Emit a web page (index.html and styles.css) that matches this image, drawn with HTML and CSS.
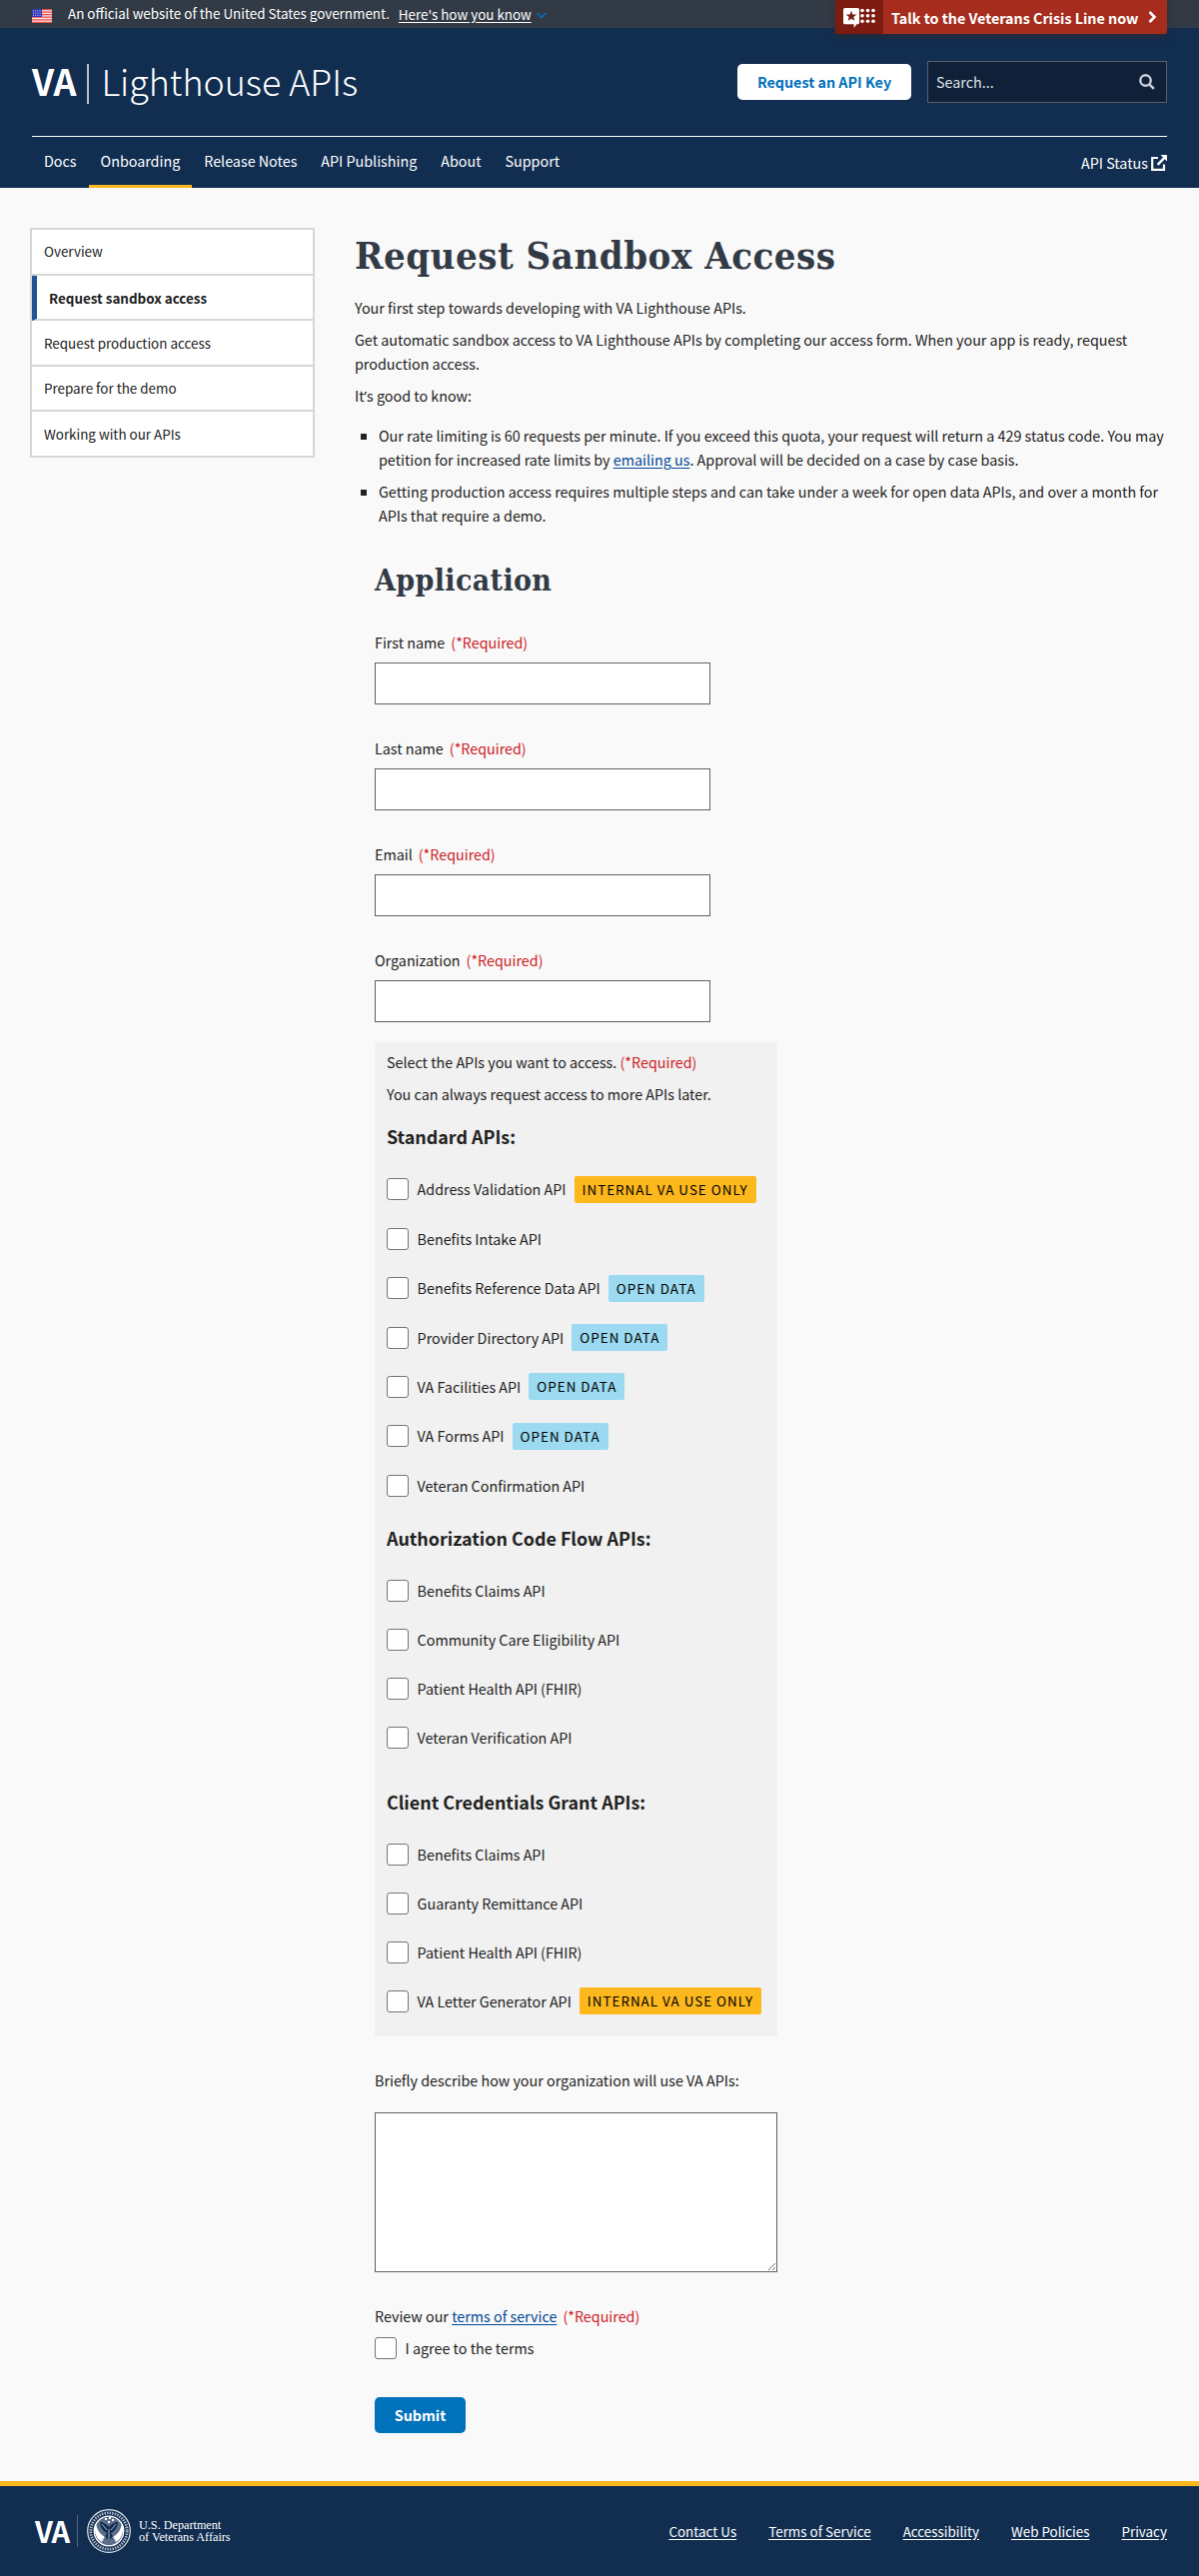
FILE: index.html
```html
<!DOCTYPE html>
<html lang="en">
<head>
<meta charset="utf-8">
<title>Request Sandbox Access | VA Lighthouse APIs</title>
<link rel="stylesheet" href="styles.css">
</head>
<body>
<div class="banner">
  <svg class="flag" width="20" height="14" viewBox="0 0 20 14"><path fill="#f8dcdc" d="M0 0h20v14H0z"/><path stroke="#e5524f" stroke-width="1.2" d="M0 .6h20M0 3.1h20M0 5.6h20M0 8.2h20M0 10.8h20M0 13.4h20"/><path fill="#2f38b5" d="M0 0h10v8H0z"/><path stroke="#c9ccf2" stroke-dasharray="1 1.2" d="M1 1.9h8M1 4.1h8M1 6.3h8"/></svg>
  <span class="banner-text">An official website of the United States government.</span>
  <a class="banner-link" href="#">Here's how you know</a>
  <svg class="banner-chevron" width="10" height="7" viewBox="0 0 10 7"><path d="M.8 1l4.2 4.4L9.200 1" fill="none" stroke="#0071bb" stroke-width="1.6"/></svg>
  <a class="crisis" href="#">
    <span class="crisis-icon"><svg width="33" height="20" viewBox="0 0 33 20"><path fill="#fff" d="M1.500 0h13A1.500 1.500 0 0 1 16 1.500v13.200a1.500 1.500 0 0 1-1.500 1.500H13.500L10.600 20v-3.800H1.500A1.500 1.500 0 0 1 0 14.700V1.500A1.500 1.500 0 0 1 1.500 0z"/><path fill="#7c1c10" d="M8 2.800l1.400 3.600 3.900.2-3 2.500 1 3.700L8 10.700l-3.300 2.100 1-3.700-3-2.500 3.900-.2z"/><g fill="#fff"><circle cx="19" cy="2.500" r="1.800"/><circle cx="24.500" cy="2.500" r="1.800"/><circle cx="30" cy="2.500" r="1.800"/><circle cx="19" cy="7.800" r="1.800"/><circle cx="24.500" cy="7.800" r="1.800"/><circle cx="30" cy="7.800" r="1.800"/><circle cx="19" cy="13.200" r="1.800"/><circle cx="24.500" cy="13.200" r="1.800"/><circle cx="30" cy="13.200" r="1.800"/></g></svg></span>
    <span class="crisis-text">Talk to the Veterans Crisis Line now</span>
    <svg width="9" height="12" viewBox="0 0 9 12"><path d="M1.500 1l5 5-5 5" fill="none" stroke="#fff" stroke-width="2.600"/></svg>
  </a>
</div>
<header class="header">
  <div class="brand-row">
    <a class="brand" href="#"><b>VA</b><i class="brand-rule"></i><span>Lighthouse APIs</span></a>
    <div class="tools">
      <a class="key-button" href="#">Request an API Key</a>
      <div class="search"><span>Search...</span><svg width="16" height="16" viewBox="0 0 16 16"><circle cx="6.500" cy="6.500" r="5.200" fill="none" stroke="#c9ced6" stroke-width="2.400"/><path d="M10.300 10.300l4.600 4.600" stroke="#c9ced6" stroke-width="2.600"/></svg></div>
    </div>
  </div>
  <nav class="nav">
    <a href="#">Docs</a><a class="on" href="#">Onboarding</a><a href="#">Release Notes</a><a href="#">API Publishing</a><a href="#">About</a><a href="#">Support</a>
    <span class="status">API Status<svg width="16" height="16" viewBox="0 0 16 16"><path d="M7 3H1.200v11.800H13V9.500" fill="none" stroke="#fff" stroke-width="2.200"/><path d="M9.500 0H16v6.500l-2.200-2.200-6.300 6.400-1.800-1.800L12 2.500z" fill="#fff"/></svg></span>
  </nav>
</header>
<div class="page">
  <aside class="side">
    <a href="#">Overview</a><a class="on" href="#">Request sandbox access</a><a href="#">Request production access</a><a href="#">Prepare for the demo</a><a href="#">Working with our APIs</a>
  </aside>
  <main class="main">
    <h1>Request Sandbox Access</h1>
    <p>Your first step towards developing with VA Lighthouse APIs.</p>
    <p>Get automatic sandbox access to VA Lighthouse APIs by completing our access form. When your app is ready, request production access.</p>
    <p>It<span class="quote">’</span>s good to know:</p>
    <ul class="notes">
      <li>Our rate limiting is 60 requests per minute. If you exceed this quota, your request will return a 429 status code. You may petition for increased rate limits by <a href="#">emailing us</a>. Approval will be decided on a case by case basis.</li>
      <li>Getting production access requires multiple steps and can take under a week for open data APIs, and over a month for APIs that require a demo.</li>
    </ul>
    <form class="form">
      <h2>Application</h2>
      <div class="field"><label for="first">First name<em>(*Required)</em></label><input id="first" type="text"></div>
      <div class="field"><label for="last">Last name<em>(*Required)</em></label><input id="last" type="text"></div>
      <div class="field"><label for="email">Email<em>(*Required)</em></label><input id="email" type="text"></div>
      <div class="field"><label for="org">Organization<em>(*Required)</em></label><input id="org" type="text"></div>
      <div class="apis">
        <p>Select the APIs you want to access. <em>(*Required)</em></p>
        <p>You can always request access to more APIs later.</p>
        <h3>Standard APIs:</h3>
        <div class="checks roomy">
          <label><input type="checkbox">Address Validation API<span class="tag internal">INTERNAL VA USE ONLY</span></label>
          <label><input type="checkbox">Benefits Intake API</label>
          <label><input type="checkbox">Benefits Reference Data API<span class="tag">OPEN DATA</span></label>
          <label><input type="checkbox">Provider Directory API<span class="tag">OPEN DATA</span></label>
          <label><input type="checkbox">VA Facilities API<span class="tag">OPEN DATA</span></label>
          <label><input type="checkbox">VA Forms API<span class="tag">OPEN DATA</span></label>
          <label><input type="checkbox">Veteran Confirmation API</label>
        </div>
        <h3 class="auth">Authorization Code Flow APIs:</h3>
        <div class="checks">
          <label><input type="checkbox">Benefits Claims API</label>
          <label><input type="checkbox">Community Care Eligibility API</label>
          <label><input type="checkbox">Patient Health API (FHIR)</label>
          <label><input type="checkbox">Veteran Verification API</label>
        </div>
        <h3 class="client">Client Credentials Grant APIs:</h3>
        <div class="checks">
          <label><input type="checkbox">Benefits Claims API</label>
          <label><input type="checkbox">Guaranty Remittance API</label>
          <label><input type="checkbox">Patient Health API (FHIR)</label>
          <label><input type="checkbox">VA Letter Generator API<span class="tag internal">INTERNAL VA USE ONLY</span></label>
        </div>
      </div>
      <label class="describe" for="describe">Briefly describe how your organization will use VA APIs:</label>
      <textarea id="describe"></textarea>
      <div class="review">Review our <a href="#">terms of service</a><em>(*Required)</em></div>
      <label class="agree"><input type="checkbox">I agree to the terms</label>
      <button class="submit" type="button">Submit</button>
    </form>
  </main>
</div>
<footer class="footer">
  <div class="logo">
    <b>VA</b><i class="logo-rule"></i>
    <svg width="44" height="44" viewBox="0 0 44 44"><circle cx="22" cy="22" r="21.300" fill="#112e51" stroke="#dfe4ea" stroke-width="1.200"/><circle cx="22" cy="22" r="18.200" fill="none" stroke="#aab5c4" stroke-width="2.800" stroke-dasharray="1.500 1.100"/><circle cx="22" cy="22" r="14.800" fill="#5d6f88" stroke="#fff" stroke-width="1.300"/><path fill="#fff" d="M9 14c1 7 4 11 9 14l-3 5C9 30 6 21 9 14zM35 14c-1 7-4 11-9 14l3 5c6-3 9-12 6-19zM18 9h2v2h-2zM22 8h2v2h-2zM25 10h2v2h-2zM21 12h2v2h-2z"/><path fill="#112e51" d="M22 18c-2-3-6-5-9-5 0 5 3 9 7 11l-4 7 4-2 2 4 2-4 4 2-4-7c4-2 7-6 7-11-3 0-7 2-9 5z"/><path d="M15 15l5 6M29 15l-5 6M22 20v12M19 28l-5 4M25 28l5 4" stroke="#cdd4de" stroke-width=".8"/></svg>
    <span class="logo-text"><span>U.S. Department</span><span>of Veterans Affairs</span></span>
  </div>
  <nav class="links"><a href="#">Contact Us</a><a href="#">Terms of Service</a><a href="#">Accessibility</a><a href="#">Web Policies</a><a href="#">Privacy</a></nav>
</footer>
</body>
</html>
```
FILE: styles.css
```css
* { box-sizing: border-box; }
body {
  margin: 0;
  background: #f9f9f9;
  color: #212121;
  font: 14.32px/24px "Noto Sans CJK SC", "Noto Sans", sans-serif;
}
a { color: #004795; text-decoration: underline; text-underline-offset: 2px; }
em { font-style: normal; color: #cd2026; }
input, textarea, button { font: inherit; margin: 0; }
.quote { font-family: "Open Sans", sans-serif; line-height: 1; }

.banner {
  display: flex;
  align-items: flex-start;
  height: 28px;
  padding: 0 32px;
  background: #323a45;
  color: #fff;
  font-size: 13.420px;
  line-height: 27px;
}
.flag { margin-top: 9px; }
.banner-text { margin-left: 16px; }
.banner-link { margin: 1px 0 0 9px; color: #fff; }
.banner-chevron { margin: 12px 0 0 5px; }
.crisis {
  display: flex;
  align-items: center;
  position: relative;
  width: 332px;
  height: 34px;
  margin-left: auto;
  background: #a62d1e;
  border-radius: 0 0 3px 0;
  box-shadow: 0 3px 6px rgba(50, 40, 40, .7);
  color: #fff;
  font-size: 14.320px;
  font-weight: 700;
  text-decoration: none;
}
.crisis-icon {
  display: flex;
  width: 48px;
  height: 34px;
  padding: 8px 0 0 8px;
  background: #7c1c10;
}
.crisis-text { margin: 0 10px 0 8px; white-space: nowrap; }

.header { height: 160px; padding: 0 32px; background: #112e51; }
.brand-row {
  display: flex;
  align-items: center;
  justify-content: space-between;
  height: 109px;
  border-bottom: 1px solid #fff;
}
.brand {
  display: flex;
  align-items: center;
  margin-top: -4px;
  color: #fff;
  font-size: 35.800px;
  line-height: 40px;
  text-decoration: none;
  white-space: nowrap;
}
.brand span { font-weight: 300; }
.brand-rule { width: 2px; height: 40px; margin: 8px 12px 0 11px; background: #b5bfcb; }
.tools { display: flex; align-items: center; gap: 16px; }
.key-button {
  width: 174px;
  height: 36px;
  border-radius: 5px;
  background: #fff;
  color: #0071bb;
  font-weight: 700;
  line-height: 36px;
  text-align: center;
  text-decoration: none;
}
.search {
  display: flex;
  align-items: center;
  justify-content: space-between;
  width: 240px;
  height: 42px;
  padding: 0 11px 0 8px;
  border: 1px solid #5b616b;
  background: #112039;
  color: #dfe3e8;
}
.nav { display: flex; height: 51px; }
.nav a {
  padding: 12px 12px 0;
  color: #fff;
  text-decoration: none;
}
.nav a.on { border-bottom: 3px solid #fdb81e; }
.status { display: flex; gap: 3px; margin: 14px 0 0 auto; color: #fff; }
.status svg { margin-top: 4px; }

.page { display: flex; gap: 40px; padding: 40px 32px 48px 30px; }
.side {
  display: flex;
  flex-direction: column;
  flex: none;
  width: 285px;
  height: 230px;
  border: 2px solid #d6d7d9;
  background: #fff;
  font-size: 13.420px;
}
.side a {
  flex: none;
  height: 45.400px;
  padding: 9.500px 12px 0;
  border-bottom: 2px solid #d6d7d9;
  color: #212121;
  text-decoration: none;
}
.side a:first-child { height: 46px; padding-top: 9px; }
.side a:last-child { height: 43px; border: 0; }
.side a.on { border-left: 5px solid #205493; font-weight: 700; }
.main { flex: 1; }
h1, h2 { color: #323a45; font-family: "DejaVu Serif Condensed", "DejaVu Serif", serif; font-weight: 700; white-space: nowrap; }
h1 { margin: 0 0 12px; font-size: 38px; font-stretch: condensed; line-height: 56px; letter-spacing: .5px; }
h2 { margin: 0 0 31px; font-size: 30px; font-stretch: condensed; line-height: 38px; letter-spacing: .350px; }
p { margin: 0 0 8px; }
.notes { margin: 16px 0 0; padding: 0 0 0 24px; list-style: square; }
.notes li + li { margin-top: 8px; }

.form { display: flex; flex-direction: column; align-items: flex-start; width: 403px; margin: 34px 0 0 20px; }
.field { display: flex; flex-direction: column; gap: 8px; margin-bottom: 32px; }
.field em, .review em { margin-left: 6px; }
.field input { width: 336px; height: 42px; border: 1px solid #5b616b; background: #fff; }
.apis { width: 403px; height: 995px; margin-top: -12px; padding: 8px 12px; background: #f1f1f1; }
h3 { margin: 18px 0 16.500px; font-size: 17.900px; line-height: 24px; }
h3.auth { margin-top: 15.400px; }
h3.client { margin-top: 27.500px; }
.checks label { display: flex; align-items: center; height: 49px; white-space: nowrap; }
.checks.roomy label { height: 49.450px; }
input[type="checkbox"] {
  appearance: none;
  width: 22px;
  height: 22px;
  margin-right: 8.600px;
  border: 1px solid #757575;
  border-radius: 3px;
  background: #fff;
}
.tag {
  height: 27px;
  margin-left: 8px;
  padding: 0 8px;
  border-radius: 2px;
  background: #9bdaf1;
  color: #000;
  font-size: 13.420px;
  line-height: 27px;
  letter-spacing: 1px;
}
.internal { background: #fdb81e; }
.describe { margin: 32px 0 20px; white-space: nowrap; }
textarea { width: 403px; height: 160px; border: 1px solid #5b616b; background: #fff; }
.review { margin-top: 32px; }
.agree { display: flex; align-items: center; height: 22px; margin-top: 9px; }
.submit {
  width: 91px;
  height: 36px;
  margin-top: 38px;
  padding: 0;
  border: 0;
  border-radius: 5px;
  background: #0071bb;
  color: #fff;
  font-weight: 700;
}

.footer {
  display: flex;
  align-items: center;
  justify-content: space-between;
  height: 95px;
  padding: 0 32px 0 35px;
  border-top: 5px solid #fdb81e;
  background: #112e51;
  color: #fff;
}
.logo { display: flex; align-items: center; }
.logo b { width: 35px; margin-top: -2px; font-size: 29px; line-height: 30px; letter-spacing: -1px; }
.logo-rule { width: 1px; height: 32px; margin: 0 9px 0 7px; background: #54677f; }
.logo-text {
  display: flex;
  flex-direction: column;
  margin-left: 8px;
  font: 12.200px/12px "Liberation Serif", serif;
  white-space: nowrap;
}
.links { display: flex; gap: 32px; margin-top: -1px; font-size: 13.420px; }
.links a { color: #fff; }
```
